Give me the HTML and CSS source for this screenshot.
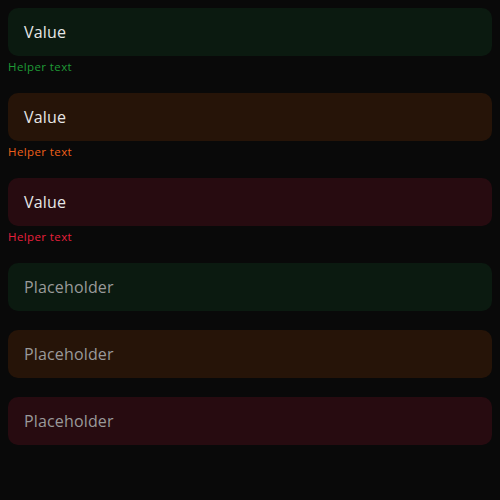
FILE: index.html
```html
<!DOCTYPE html>
<html>
<head>
<meta charset="utf-8">
<link rel="stylesheet" href="styles.css">
</head>
<body>
<div class="stack">
  <div class="group">
    <div class="field green"><span class="value">Value</span></div>
    <div class="helper green-t">Helper text</div>
  </div>
  <div class="group">
    <div class="field orange"><span class="value">Value</span></div>
    <div class="helper orange-t">Helper text</div>
  </div>
  <div class="group">
    <div class="field red"><span class="value">Value</span></div>
    <div class="helper red-t">Helper text</div>
  </div>
  <div class="group">
    <div class="field green"><span class="ph">Placeholder</span></div>
  </div>
  <div class="group">
    <div class="field orange"><span class="ph">Placeholder</span></div>
  </div>
  <div class="group">
    <div class="field red"><span class="ph">Placeholder</span></div>
  </div>
</div>
</body>
</html>
```
FILE: styles.css
```css
html, body {
  margin: 0;
  padding: 0;
  background: #090909;
  height: 100%;
}
body {
  font-family: "Open Sans", "Noto Sans", sans-serif;
}
.stack {
  padding: 8px;
  display: flex;
  flex-direction: column;
  gap: 19px;
}
.group {
  display: flex;
  flex-direction: column;
}
.field {
  height: 48px;
  border-radius: 10px;
  display: flex;
  align-items: center;
  padding: 0 16px;
  font-size: 16px;
  letter-spacing: 0.15px;
}
.green { background: #0b1a10; }
.orange { background: #261408; }
.red { background: #270b10; }
.value { color: #e6e6e6; }
.ph { color: #9a9a9a; }
.helper {
  font-size: 11.5px;
  letter-spacing: 0.4px;
  line-height: 18px;
  padding-top: 2px;
  margin-bottom: -2px;
}
.green-t { color: #1f9a36; }
.orange-t { color: #f0601a; }
.red-t { color: #e8203c; }
```
